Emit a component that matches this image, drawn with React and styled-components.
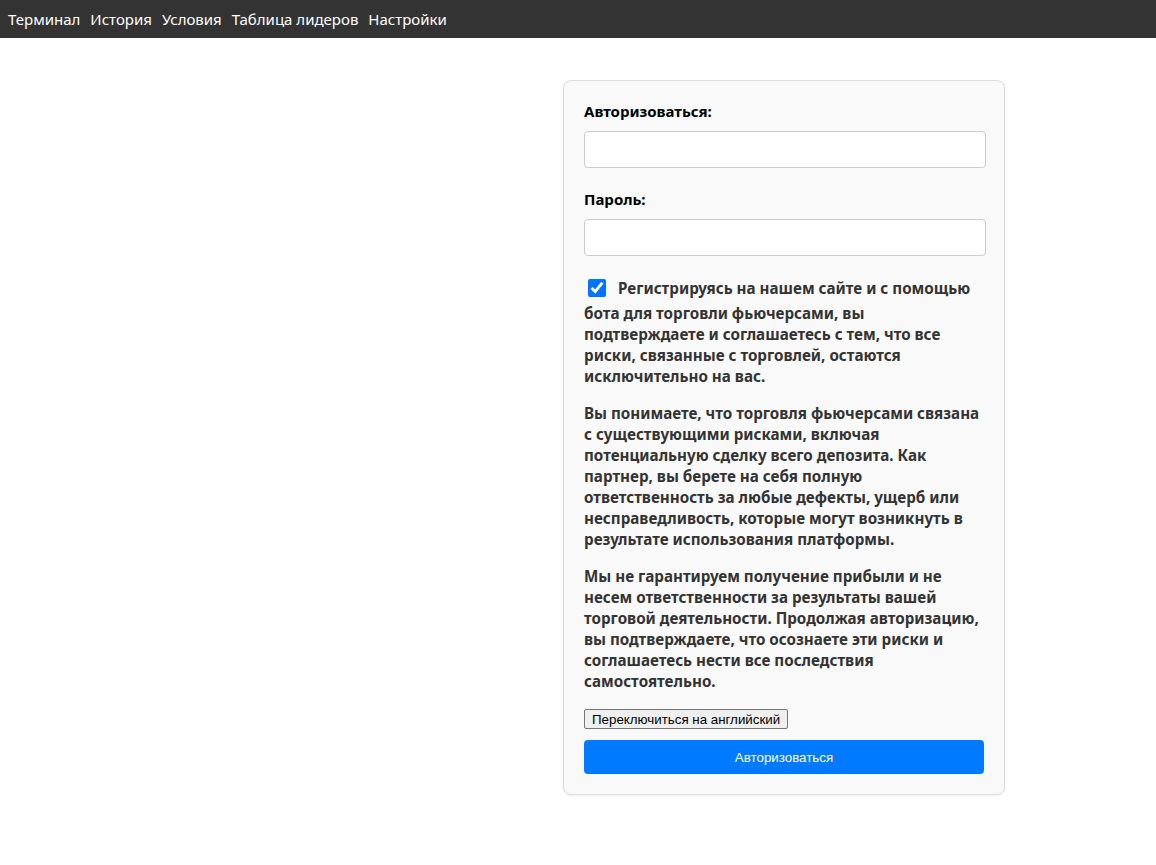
import React, { useState } from "react";
import styled, { createGlobalStyle } from "styled-components";

const GlobalStyle = createGlobalStyle`
  body {
    margin: 0;
    background: #fff;
    font-family: "Noto Sans", "Open Sans", sans-serif;
  }
`;

function App() {
  const [agreed, setAgreed] = useState(true);

  return (
    <>
      <GlobalStyle />
      <NavBar>
        <NavLink>Терминал</NavLink>
        <NavLink>История</NavLink>
        <NavLink>Условия</NavLink>
        <NavLink>Таблица лидеров</NavLink>
        <NavLink>Настройки</NavLink>
      </NavBar>
      <Page>
        <Card>
          <Label>Авторизоваться:</Label>
          <Input type="text" />
          <Label>Пароль:</Label>
          <Input type="password" />
          <Terms $first>
            <Check
              type="checkbox"
              checked={agreed}
              onChange={() => setAgreed(!agreed)}
            />
            Регистрируясь на нашем сайте и с помощью бота для торговли
            фьючерсами, вы
            <br />
            подтверждаете и соглашаетесь с тем, что все риски, связанные с
            торговлей, остаются исключительно на вас.
          </Terms>
          <Terms>
            Вы понимаете, что торговля фьючерсами связана с существующими
            рисками, включая потенциальную сделку всего депозита. Как партнер,
            вы берете на себя полную ответственность за любые дефекты, ущерб
            или несправедливость, которые могут возникнуть в результате
            использования платформы.
          </Terms>
          <Terms>
            Мы не гарантируем получение прибыли и не несем ответственности за
            результаты вашей торговой деятельности. Продолжая авторизацию, вы
            подтверждаете, что осознаете эти риски и соглашаетесь нести все
            последствия самостоятельно.
          </Terms>
          <LangButton>Переключиться на английский</LangButton>
          <SubmitButton>Авторизоваться</SubmitButton>
        </Card>
      </Page>
    </>
  );
}

export default App;

const NavBar = styled.nav`
  height: 38px;
  background: #333;
  display: flex;
  align-items: center;
  padding: 0 8px;
  gap: 10px;
`;

const NavLink = styled.a`
  color: #fff;
  font-size: 15px;
  cursor: pointer;
`;

const Page = styled.main`
  display: flex;
  padding: 42px 0 40px 563px;
`;

const Card = styled.div`
  width: 400px;
  padding: 20px;
  background: #f9f9f9;
  border: 1px solid #ddd;
  border-radius: 8px;
  box-shadow: 0 1px 3px rgba(0, 0, 0, 0.06);
  display: flex;
  flex-direction: column;
`;

const Label = styled.label`
  font-size: 15px;
  font-weight: bold;
  color: #000;
  line-height: 21px;
  margin-bottom: 9px;
`;

const Input = styled.input`
  box-sizing: border-box;
  width: 402px;
  height: 37px;
  border: 1px solid #ccc;
  border-radius: 4px;
  background: #fff;
  margin-bottom: 21px;
  padding: 0 8px;
  font-size: 15px;
`;

const Terms = styled.p`
  margin: ${(props) => (props.$first ? "-1px" : "0")} 0 16px;
  font-size: 15.2px;
  font-weight: bold;
  line-height: 21px;
  color: #333;
`;

const Check = styled.input`
  width: 18px;
  height: 18px;
  margin: 3px 12px 6px 4px;
  vertical-align: middle;
  accent-color: #0075ff;
`;

const LangButton = styled.button`
  align-self: flex-start;
  font-family: "Liberation Sans", Arial, sans-serif;
  font-size: 13.33px;
  padding: 2px 7px 1px;
  background: #efefef;
  border: 1px solid #767676;
  border-radius: 2px;
  color: #000;
  margin: 1px 0 11px;
`;

const SubmitButton = styled.button`
  height: 34px;
  border: none;
  border-radius: 4px;
  background: #007bff;
  color: #fff;
  font-family: "Liberation Sans", Arial, sans-serif;
  font-size: 13.33px;
  cursor: pointer;
`;
